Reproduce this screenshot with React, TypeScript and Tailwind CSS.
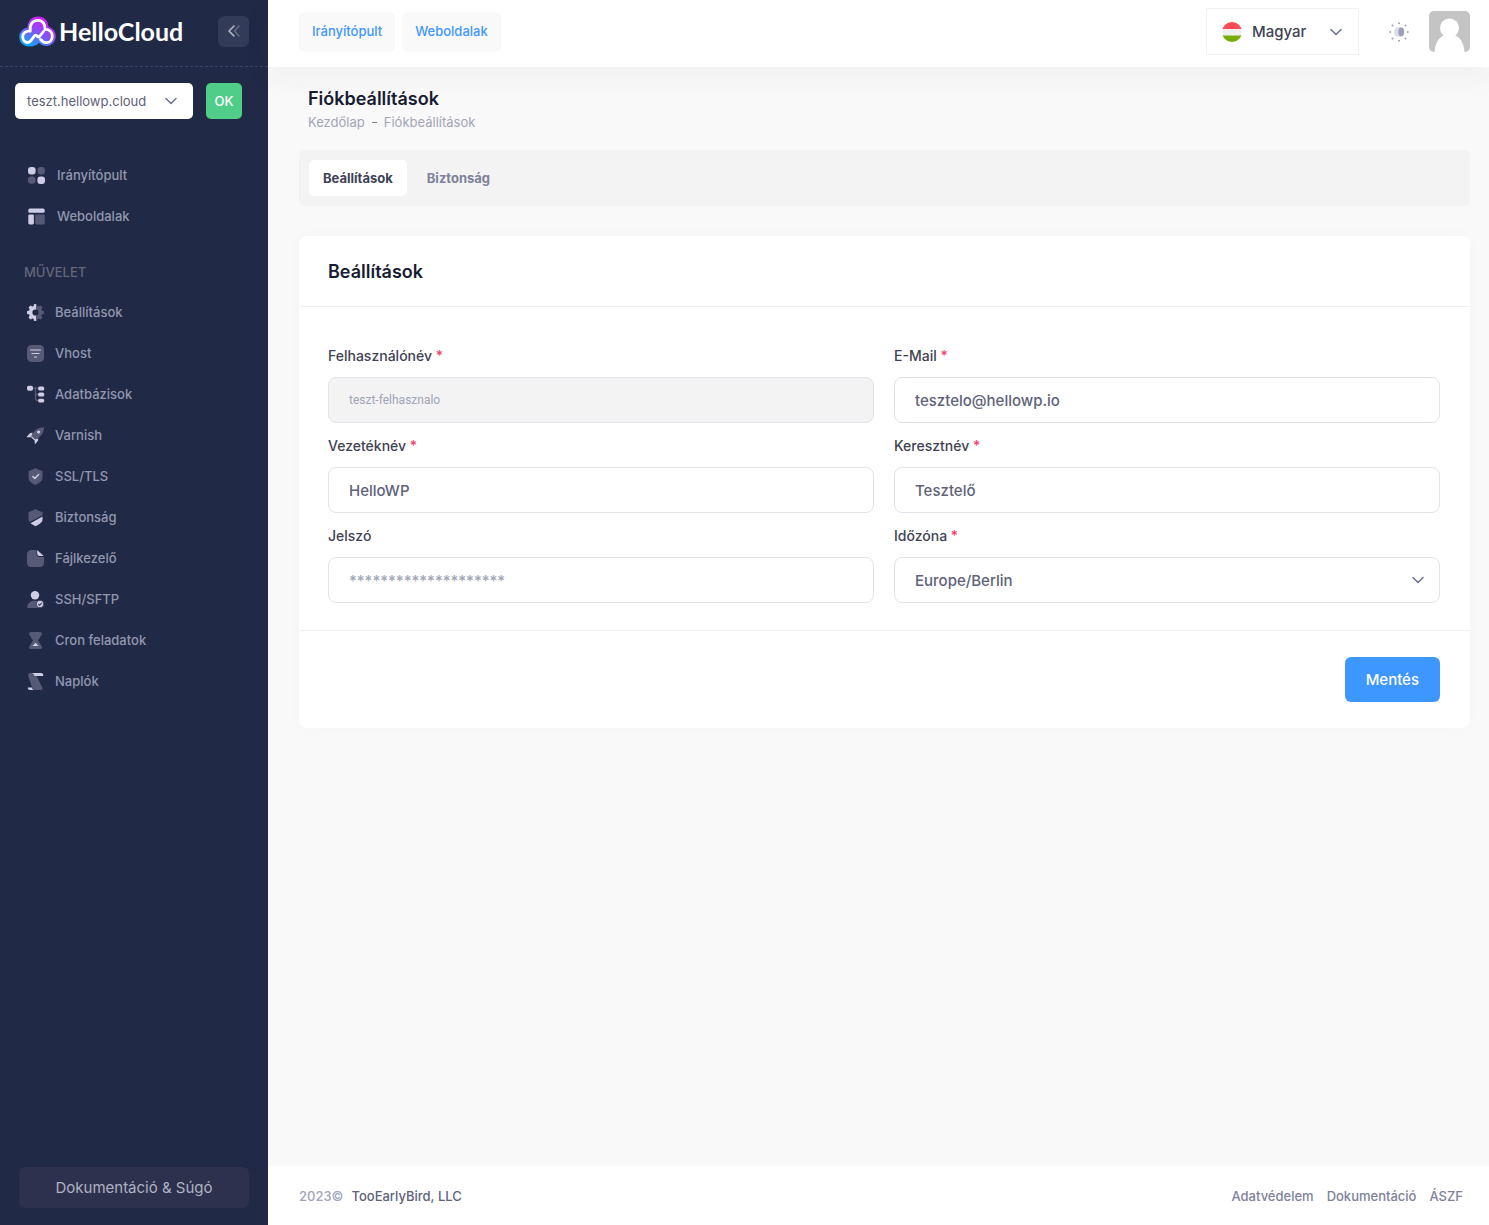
import React, { useState } from 'react';

const LIGHT = '#cfcde4';
const DIM = '#565a76';

function GearHalf({ color, clip }: { color: string; clip: string }) {
  return (
    <g clipPath={`url(#${clip})`}>
      <circle cx="9.5" cy="9.5" r="4.9" fill="none" stroke={color} strokeWidth="3.6" />
      {[0, 45, 90, 135, 180, 225, 270, 315].map((a) => (
        <rect key={a} x="7.7" y="1" width="3.6" height="4" rx="1.1" fill={color} transform={`rotate(${a} 9.5 9.5)`} />
      ))}
    </g>
  );
}

const ICONS: Record<string, React.ReactNode> = {
  grid: (
    <>
      <rect x="1" y="1" width="7.6" height="7.6" rx="3" fill={LIGHT} />
      <rect x="10.6" y="1" width="7.2" height="7.4" rx="3" fill={DIM} />
      <rect x="1" y="10.6" width="7.4" height="7.2" rx="3" fill={DIM} />
      <rect x="10.4" y="10.4" width="7.6" height="7.6" rx="3" fill={LIGHT} />
    </>
  ),
  layout: (
    <>
      <rect x="1.3" y="1.4" width="16.4" height="4.4" rx="1.6" fill={LIGHT} />
      <rect x="1.3" y="7.4" width="5.6" height="10" rx="1.4" fill={LIGHT} />
      <rect x="8.2" y="7.4" width="9.5" height="10" rx="1.4" fill={DIM} />
    </>
  ),
  gear: (
    <>
      <clipPath id="gear-left"><rect x="0" y="0" width="10" height="19" /></clipPath>
      <clipPath id="gear-right"><rect x="10" y="0" width="9" height="19" /></clipPath>
      <GearHalf color={LIGHT} clip="gear-left" />
      <GearHalf color={DIM} clip="gear-right" />
    </>
  ),
  vhost: (
    <>
      <rect x="1" y="1" width="17" height="17" rx="4.5" fill={DIM} />
      <path d="M4.5 6h10M6 9.5h7M8.5 13h2" stroke={LIGHT} strokeWidth="1.2" strokeLinecap="round" />
    </>
  ),
  tree: (
    <>
      <path d="M6 3.2h3.5v10.3a2 2 0 0 0 2 2h1.5M9.5 3.2H13M9.5 9.5H13" fill="none" stroke={DIM} strokeWidth="1.3" />
      <rect x="1" y="0.8" width="6" height="5" rx="1.8" fill={LIGHT} />
      <rect x="12.2" y="1.6" width="6" height="3.8" rx="1.5" fill={LIGHT} />
      <rect x="12.2" y="7.6" width="6" height="3.8" rx="1.5" fill={LIGHT} />
      <rect x="12.2" y="13.7" width="6" height="3.8" rx="1.5" fill={LIGHT} />
    </>
  ),
  rocket: (
    <>
      <path d="M17.4 1.2c.5 0 .8.3.7.8-.5 4.3-2.2 7.4-5.3 9.6L9.8 13.8 5.3 9.3l2.2-3C9.8 3.1 13.1 1.6 17.4 1.2Z" fill={DIM} />
      <path d="M6.6 6.7 4.2 7 .9 10.6c-.2.3 0 .6.3.6h3.9M12.3 12.5l-.3 2.3-2.5 3c-.3.3-.7.2-.7-.2l-.3-4.1M5.4 9.7l3.9 3.9-1.1.7-3.5-3.5Z" fill={LIGHT} />
      <circle cx="12.6" cy="6" r="1.6" fill={LIGHT} />
    </>
  ),
  shieldCheck: (
    <>
      <path d="M9.5 1c2.2 1.5 4.4 2.4 7 3v6.5c0 3.6-3.2 5.6-7 7.5-3.8-1.9-7-3.9-7-7.5V4c2.6-.6 4.8-1.5 7-3Z" fill={DIM} />
      <path d="m6.8 9.5 2 2 3.8-3.9" fill="none" stroke={LIGHT} strokeWidth="1.5" strokeLinecap="round" strokeLinejoin="round" />
    </>
  ),
  shield: (
    <>
      <path d="M9.5 1c2.2 1.5 4.4 2.4 7 3v3.2L3.6 14C2.8 13 2.5 12 2.5 10.5V4c2.6-.6 4.8-1.5 7-3Z" fill={DIM} />
      <path d="M16.5 8.4v2.9c0 3.2-3.2 5-7 6.9-1.9-.9-3.7-1.9-5-3Z" fill={LIGHT} />
    </>
  ),
  file: (
    <>
      <path d="M5.5 1h5v3.8c0 2 1.4 3.2 3.2 3.2H18v5.5c0 3-1.5 4.5-4.5 4.5h-8C2.5 18 1 16.5 1 13.5v-8C1 2.5 2.5 1 5.5 1Z" fill={DIM} />
      <path d="M11.2 1.1 17.7 7h-4c-1.5 0-2.5-.9-2.5-2.4Z" fill={LIGHT} />
    </>
  ),
  user: (
    <>
      <path d="M1.2 17c.3-4 3.2-6.3 7.3-6.3 3.6 0 6.5 2.3 7.5 6.3 0 .6-.3 1-1 1H2.2c-.6 0-1-.4-1-1Z" fill={DIM} />
      <circle cx="9" cy="5.2" r="4.2" fill={LIGHT} />
      <circle cx="14" cy="14" r="3.8" fill={LIGHT} stroke="#202a46" strokeWidth=".8" />
      <path d="m12.3 14 1.3 1.3 2.2-2.5" fill="none" stroke="#3b405c" strokeWidth="1.2" />
    </>
  ),
  hourglass: (
    <>
      <path d="M5 1h9c2 0 2.4 1.5 1.5 3L12 9.5l3.5 5.5c.9 1.5.5 3-1.5 3H5c-2 0-2.4-1.5-1.5-3L7 9.5 3.5 4C2.6 2.5 3 1 5 1Z" fill={DIM} />
      <path d="M9.5 11.7 12.6 15H6.4Z" fill={LIGHT} />
    </>
  ),
  scroll: (
    <>
      <path d="M4.3 1h5.2L12 7l4.3 8.5c.6 1.4 0 2.5-1.5 2.5H8.5c-1 0-1.6-.6-2-1.5L2.3 4.2C1.8 2.5 2.5 1 4.3 1Z" fill={DIM} />
      <path d="M5.8 1h9.2c1.3 0 2.1.8 2.3 2.1.1.6-.2.9-.8.9H8.6C8.2 2.700 7.500 1.500 5.8 1ZM2.2 15.400h3.600c.2 1 .8 2 1.700 2.600H4.200c-1.500 0-2.300-.7-2.500-1.900-.1-.4.100-.7.500-.7Z" fill={LIGHT} />
    </>
  ),
};

const MAIN_LINKS = [
  { label: 'Irányítópult', icon: 'grid' },
  { label: 'Weboldalak', icon: 'layout' },
];

const ACTION_LINKS = [
  { label: 'Beállítások', icon: 'gear' },
  { label: 'Vhost', icon: 'vhost' },
  { label: 'Adatbázisok', icon: 'tree' },
  { label: 'Varnish', icon: 'rocket' },
  { label: 'SSL/TLS', icon: 'shieldCheck' },
  { label: 'Biztonság', icon: 'shield' },
  { label: 'Fájlkezelő', icon: 'file' },
  { label: 'SSH/SFTP', icon: 'user' },
  { label: 'Cron feladatok', icon: 'hourglass' },
  { label: 'Naplók', icon: 'scroll' },
];

function Icon({ name }: { name: string }) {
  return (
    <svg className="h-[19px] w-[19px] shrink-0" viewBox="0 0 19 19" aria-hidden="true">
      {ICONS[name]}
    </svg>
  );
}

function Chevron({ className }: { className: string }) {
  return (
    <svg className={`pointer-events-none absolute top-1/2 h-3 w-3 -translate-y-1/2 ${className}`} viewBox="0 0 12 12" fill="none" aria-hidden="true">
      <path d="m1 3.5 5 5 5-5" stroke="#6b7090" strokeWidth="1.5" strokeLinecap="round" strokeLinejoin="round" />
    </svg>
  );
}

function Logo() {
  return (
    <a href="#" className="flex items-center gap-[3px]">
      <svg className="h-[31px] w-[37px]" viewBox="0 0 37 31" fill="none" aria-hidden="true">
        <defs>
          <linearGradient id="logo-fill" x1="24" y1="2" x2="10" y2="29" gradientUnits="userSpaceOnUse">
            <stop stopColor="#d41df0" />
            <stop offset=".5" stopColor="#8450f7" />
            <stop offset="1" stopColor="#12a4f5" />
          </linearGradient>
        </defs>
        <path
          d="M8.5 11.5C8.5 5 13 .5 19 .5c6 0 10 4 10.5 10.2 4.500 1.300 7.300 5 7.300 9.300 0 5.800-4 10-9.300 10-3.200 0-5.300-1-7.500-3-2.200 2.200-5.500 3.500-9.500 3.500C4.500 30.500.3 26.500.3 21c0-4.500 3-8.500 8.200-9.500Z"
          fill="url(#logo-fill)"
        />
        <path
          d="M24.500 15.500 20.500 20.500C19.300 22 18.500 20.500 17.500 19.500 16.300 18.500 15.500 19.500 14.500 21 12.500 24 11.500 26.500 9 26.500 5.500 26.500 3.700 23.800 3.700 20.700 3.700 17 7 14.500 11.200 15.200 10.500 8.500 13.500 4.300 18.700 4.300 23.500 4.300 26.500 8 26 13.300 30.500 13.300 33.300 16 33.300 20.200 33.300 24 30.800 26.700 27.500 26.700 24.800 26.700 23.300 25.500 21.500 23.500"
          stroke="#fff"
          strokeWidth="2.8"
          strokeLinecap="round"
          strokeLinejoin="round"
        />
      </svg>
      <span className="font-['Lato',sans-serif] text-[25px] leading-[30px] font-bold text-white">HelloCloud</span>
    </a>
  );
}

function Sidebar() {
  return (
    <aside className="flex w-[268px] shrink-0 flex-col bg-[#202a46]">
      <div className="flex h-[67px] items-center justify-between border-b border-dashed border-[#36436e] pr-[19px] pb-1 pl-[19px]">
        <Logo />
        <button type="button" aria-label="Menü összecsukása" className="flex h-[31px] w-[31px] items-center justify-center rounded-md bg-[#323b57]">
          <svg className="h-3 w-3" viewBox="0 0 12 12" fill="none" strokeWidth="1.5" strokeLinecap="round" strokeLinejoin="round" aria-hidden="true">
            <path d="M11 1 6.5 6 11 11" stroke="#666c87" />
            <path d="M6 1 1 6l5 5" stroke="#b9bccb" />
          </svg>
        </button>
      </div>

      <form className="flex gap-[13px] px-[15px] pt-4" onSubmit={(e) => e.preventDefault()}>
        <div className="relative w-[178px]">
          <select aria-label="Weboldal" className="h-9 w-full appearance-none rounded-[5px] bg-white pt-0.5 pr-9 pl-3 text-[13px] text-[#5e6278]">
            <option>teszt.hellowp.cloud</option>
          </select>
          <Chevron className="right-4" />
        </div>
        <button type="submit" className="h-9 w-9 rounded-[5px] bg-[#50cd89] pt-0.5 text-[13px] font-medium text-white">OK</button>
      </form>

      <nav className="flex flex-col pt-9 text-[13px] font-medium text-[#9297b0]">
        {MAIN_LINKS.map((item) => (
          <a key={item.label} href="#" className="flex h-[41px] items-center gap-[11px] pl-[27px]">
            <Icon name={item.icon} />
            {item.label}
          </a>
        ))}
        <h2 className="mt-[25px] mb-[9px] pl-6 text-[13px] leading-[21px] font-medium text-[#63667c]">MŰVELET</h2>
        {ACTION_LINKS.map((item) => (
          <a key={item.label} href="#" className="flex h-[41px] items-center gap-2.5 pl-[26px]">
            <Icon name={item.icon} />
            {item.label}
          </a>
        ))}
      </nav>

      <a href="#" className="mx-[19px] mt-auto mb-[17px] flex h-[41px] items-center justify-center rounded-md bg-[#2d314d] pt-0.5 text-[15px] text-[#b0b2c2]">
        Dokumentáció &amp; Súgó
      </a>
    </aside>
  );
}

function Header() {
  return (
    <header className="relative z-10 flex h-[67px] items-center justify-between bg-white pr-[19px] pb-1 pl-[31px] shadow-[0_10px_30px_0_rgba(60,60,60,0.05)]">
      <nav className="flex gap-[7px] text-[13px] font-medium text-[#3e97ff]">
        <a href="#" className="flex h-10 items-center rounded-md bg-[#f9f9f9] px-[13px]">Irányítópult</a>
        <a href="#" className="flex h-10 items-center rounded-md bg-[#f9f9f9] px-[13px]">Weboldalak</a>
      </nav>
      <div className="flex items-center">
        <div className="relative w-[153px]">
          <svg className="pointer-events-none absolute top-1/2 left-4 h-5 w-5 -translate-y-1/2" viewBox="0 0 20 20" aria-hidden="true">
            <clipPath id="flag"><circle cx="10" cy="10" r="10" /></clipPath>
            <g clipPath="url(#flag)">
              <rect width="20" height="20" fill="#f0f0f0" />
              <rect width="20" height="7" fill="#ff4b55" />
              <rect y="13.5" width="20" height="7" fill="#73af00" />
            </g>
          </svg>
          <select aria-label="Nyelv" className="h-[47px] w-full appearance-none border border-[#f1f1f2] bg-white pt-0.5 pl-[45px] text-[15px] font-medium text-[#3f4254]">
            <option>Magyar</option>
          </select>
          <Chevron className="right-[17px]" />
        </div>
        <button type="button" aria-label="Téma váltása" className="mr-5 ml-[30px] h-5 w-5">
          <svg viewBox="0 0 20 20" aria-hidden="true">
            <g fill="#9a9ebb">
              <circle cx="10" cy="1.3" r="1" />
              <circle cx="10" cy="18.7" r="1" />
              <circle cx="1.3" cy="10" r="1" />
              <circle cx="18.7" cy="10" r="1" />
              <circle cx="3.5" cy="3.5" r="1" />
              <circle cx="16.5" cy="3.5" r="1" />
              <circle cx="3.5" cy="16.5" r="1" />
              <circle cx="16.5" cy="16.5" r="1" />
            </g>
            <circle cx="10" cy="10" r="5" fill="#dcdde6" />
            <ellipse cx="12.3" cy="10" rx="2.9" ry="4.4" fill="#9a9ebb" />
          </svg>
        </button>
        <button type="button" aria-label="Profil" className="h-[41px] w-[41px] overflow-hidden rounded-[5px]">
          <svg viewBox="0 0 41 41" aria-hidden="true">
            <rect width="41" height="41" fill="#c4c4c4" />
            <path d="M20.5 23c-9 0-14.5 8-15 18h30c-.5-10-6-18-15-18Z" fill="#fff" />
            <circle cx="20.5" cy="17" r="9.5" fill="#fff" />
          </svg>
        </button>
      </div>
    </header>
  );
}

const INPUT = 'h-[46px] w-full rounded-lg border border-[#e1e3ea] bg-white px-5 text-[15px] font-medium text-[#5e6278]';

function Field({ id, label, required, children }: { id: string; label: string; required?: boolean; children: React.ReactNode }) {
  return (
    <div>
      <label htmlFor={id} className="mb-[11px] block text-sm leading-5 font-medium text-[#3f4254]">
        {label}
        {required && <span className="text-[#f1416c]"> *</span>}
      </label>
      {children}
    </div>
  );
}

function SettingsCard() {
  const [email, setEmail] = useState('tesztelo@hellowp.io');
  const [lastName, setLastName] = useState('HelloWP');
  const [firstName, setFirstName] = useState('Tesztelő');

  return (
    <form className="mt-[30px] rounded-lg bg-white shadow-[0_0_20px_0_rgba(76,87,125,0.02)]" onSubmit={(e) => e.preventDefault()}>
      <h2 className="border-b border-[#f1f1f4] pt-[22px] pr-[30px] pb-5 pl-[29px] text-lg leading-7 font-semibold text-[#181c32]">Beállítások</h2>
      <div className="grid grid-cols-2 gap-x-5 gap-y-[13px] pt-[39px] pr-[30px] pb-[27px] pl-[29px]">
        <Field id="username" label="Felhasználónév" required>
          <input
            id="username"
            disabled
            value="teszt-felhasznalo"
            className="h-[46px] w-full rounded-lg border border-[#e1e3ea] bg-[#f3f3f3] px-5 font-['Roboto',sans-serif] text-xs text-[#a1a5b7]"
          />
        </Field>
        <Field id="email" label="E-Mail" required>
          <input id="email" type="email" value={email} onChange={(e) => setEmail(e.target.value)} className={INPUT} />
        </Field>
        <Field id="lastname" label="Vezetéknév" required>
          <input id="lastname" value={lastName} onChange={(e) => setLastName(e.target.value)} className={INPUT} />
        </Field>
        <Field id="firstname" label="Keresztnév" required>
          <input id="firstname" value={firstName} onChange={(e) => setFirstName(e.target.value)} className={INPUT} />
        </Field>
        <Field id="password" label="Jelszó">
          <input id="password" type="password" placeholder="********************" className={`${INPUT} placeholder:text-[#a1a5b7]`} />
        </Field>
        <Field id="timezone" label="Időzóna" required>
          <div className="relative">
            <select id="timezone" className={`${INPUT} appearance-none pt-0.5`}>
              <option>Europe/Berlin</option>
            </select>
            <Chevron className="right-4" />
          </div>
        </Field>
      </div>
      <div className="flex justify-end border-t border-[#f1f1f4] py-[26px] pr-[30px] pl-[29px]">
        <button type="submit" className="h-[45px] rounded-md bg-[#3e97ff] px-[21px] pt-0.5 text-[15px] font-medium text-white">Mentés</button>
      </div>
    </form>
  );
}

export default function App() {
  const [tab, setTab] = useState('Beállítások');

  return (
    <div className="flex min-h-screen bg-[#f9f9f9] font-['Inter',sans-serif]">
      <Sidebar />
      <div className="flex min-w-0 flex-1 flex-col">
        <Header />
        <main className="flex-1 pt-[19px] pr-[19px] pb-8 pl-[31px]">
          <div className="pl-[9px]">
            <h1 className="text-lg leading-[26px] font-semibold text-[#181c32]">Fiókbeállítások</h1>
            <div className="flex items-center gap-[7px] text-[13px] leading-5 text-[#a1a5b7]">
              <a href="#">Kezdőlap</a>
              <span className="h-px w-[5px] bg-[#7e8299]" />
              <span>Fiókbeállítások</span>
            </div>
          </div>

          <div className="mt-[18px] flex gap-1.5 rounded-md bg-[#f3f3f3] p-2.5">
            {['Beállítások', 'Biztonság'].map((name) => (
              <button
                key={name}
                type="button"
                onClick={() => setTab(name)}
                className={`h-9 rounded-[5px] px-3.5 pt-0.5 text-[13px] font-bold ${tab === name ? 'bg-white text-[#3f4254]' : 'text-[#7e8299]'}`}
              >
                {name}
              </button>
            ))}
          </div>

          <SettingsCard />
        </main>
        <footer className="flex h-[59px] items-center justify-between bg-white pt-0.5 pr-[26px] pl-[31px] text-[13px] font-medium">
          <div className="flex gap-2">
            <span className="text-[#a1a5b7]">2023©</span>
            <a href="#" className="text-[#5e6278]">TooEarlyBird, LLC</a>
          </div>
          <nav className="flex gap-[13px] text-[#7e8299]">
            <a href="#">Adatvédelem</a>
            <a href="#">Dokumentáció</a>
            <a href="#">ÁSZF</a>
          </nav>
        </footer>
      </div>
    </div>
  );
}
